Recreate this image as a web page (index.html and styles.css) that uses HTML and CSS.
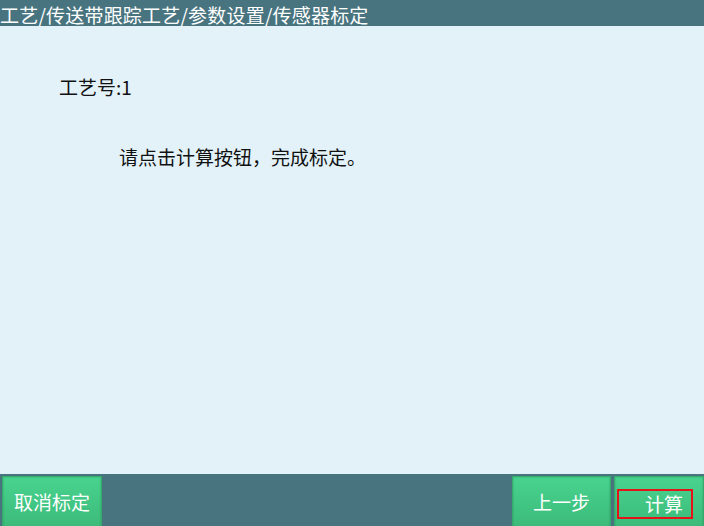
FILE: index.html
```html
<!DOCTYPE html>
<html lang="zh-CN">
<head>
<meta charset="utf-8">
<title>传感器标定</title>
<link rel="stylesheet" href="styles.css">
</head>
<body>
<div class="app">
  <header class="titlebar">工艺/传送带跟踪工艺/参数设置/传感器标定</header>
  <main class="content">
    <div class="craft">工艺号:1</div>
    <div class="hint">请点击计算按钮，完成标定。</div>
  </main>
  <footer class="toolbar">
    <button class="btn btn-cancel">取消标定</button>
    <div class="spacer"></div>
    <button class="btn btn-prev">上一步</button>
    <button class="btn btn-calc"><span class="focus">计算</span></button>
  </footer>
</div>
</body>
</html>
```
FILE: styles.css
```css
* { box-sizing: border-box; }
html, body {
  margin: 0;
  padding: 0;
  width: 704px;
  height: 526px;
  overflow: hidden;
  font-family: "Noto Sans CJK SC", "Noto Sans", sans-serif;
}
.app {
  display: flex;
  flex-direction: column;
  width: 704px;
  height: 526px;
  background: #e3f2f8;
}
.titlebar {
  height: 26px;
  background: #487480;
  color: #ffffff;
  font-size: 19px;
  line-height: 22px;
  padding-top: 4px;
  letter-spacing: 0.2px;
  white-space: nowrap;
}
.content {
  flex: 1;
  padding-top: 48px;
  color: #111;
  font-size: 19px;
}
.craft {
  padding-left: 59px;
  line-height: 26px;
}
.hint {
  padding-left: 119px;
  margin-top: 44px;
  line-height: 26px;
}
.toolbar {
  height: 52px;
  background: #487480;
  display: flex;
  align-items: flex-start;
  padding: 2px 0 0 2px;
  gap: 3px;
}
.spacer { flex: 1; }
.btn {
  height: 52px;
  border: 1px solid #36a96c;
  background: linear-gradient(#48d38e, #3cba79);
  box-shadow: inset 0 0 2px rgba(0, 80, 40, 0.35);
  color: #ffffff;
  font-family: inherit;
  font-size: 19px;
  padding: 0 0 2px 0;
  margin: 0;
  display: flex;
  align-items: flex-start;
  justify-content: center;
}
.btn-cancel, .btn-prev {
  padding-top: 13px;
  line-height: 24px;
}
.btn-cancel { width: 100px; }
.btn-prev { width: 99px; }
.btn-calc {
  width: 90px;
  justify-content: flex-start;
  padding-left: 2px;
  padding-top: 12px;
}
.focus {
  width: 76px;
  height: 30px;
  border: 2px solid #e5141a;
  display: flex;
  align-items: center;
  justify-content: flex-end;
  padding-right: 8px;
  line-height: 24px;
}
```
